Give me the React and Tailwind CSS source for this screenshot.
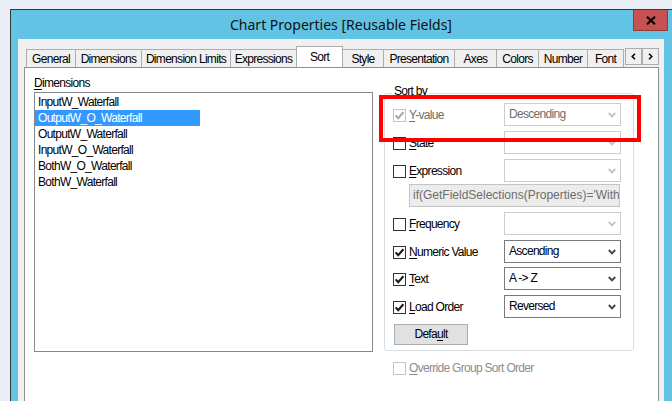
import React from "react";

const F = { fontFamily: '"Liberation Sans", Arial, sans-serif' };

function Check({ checked, disabled }) {
  return (
    <span
      className={`flex w-[13px] h-[13px] shrink-0 items-center justify-center border bg-white mt-[2px] ${
        disabled ? "border-[#c4c4c4]" : "border-[#333333]"
      }`}
    >
      {checked && (
        <svg width="11" height="11" viewBox="0 0 11 11">
          <path
            d="M1.6 5.4 L4.2 8.2 L9.4 2.2"
            fill="none"
            stroke={disabled ? "#a8a8a8" : "#1a1a1a"}
            strokeWidth="2.1"
          />
        </svg>
      )}
    </span>
  );
}

function Chevron({ disabled }) {
  return (
    <svg width="8" height="6" viewBox="0 0 8 6">
      <path
        d="M0.8 1 L4 4.3 L7.2 1"
        fill="none"
        stroke={disabled ? "#c2c2c2" : "#444444"}
        strokeWidth="1.9"
      />
    </svg>
  );
}

function Drop({ value, disabled }) {
  return (
    <div
      className={`flex w-[117px] h-[23px] shrink-0 items-center border bg-white pl-[4px] pr-[4px] ${
        disabled ? "border-[#cccccc] text-[#6d6d6d]" : "border-[#7a7a7a] text-black"
      }`}
    >
      <span className="flex-1 leading-[14px] mb-[1px]">{value}</span>
      <Chevron disabled={disabled} />
    </div>
  );
}

function U({ children }) {
  return <span className="underline underline-offset-[2px] decoration-1">{children}</span>;
}

function Row({ checked, disabled, first, rest, drop, dropDisabled }) {
  return (
    <div className="flex h-[23px] items-center pl-[8px] pr-[12px]">
      <Check checked={checked} disabled={disabled} />
      <span
        className={`flex-1 ml-[3px] leading-[14px] ${disabled ? "text-[#6d6d6d]" : "text-black"}`}
      >
        <U>{first}</U>
        {rest}
      </span>
      <Drop value={drop} disabled={dropDisabled} />
    </div>
  );
}

const tabs = [
  ["General", 50],
  ["Dimensions", 67],
  ["Dimension Limits", 90],
  ["Expressions", 67],
  ["Sort", 47, true],
  ["Style", 42],
  ["Presentation", 72],
  ["Axes", 43],
  ["Colors", 43],
  ["Number", 50],
  ["Font", 37],
];

const items = [
  "InputW_Waterfall",
  "OutputW_O_Waterfall",
  "OutputW_Waterfall",
  "InputW_O_Waterfall",
  "BothW_O_Waterfall",
  "BothW_Waterfall",
];

export default function App() {
  return (
    <div
      className="w-[672px] h-[401px] overflow-hidden bg-[#eaeff7] pt-[9px] pl-[10px] text-[12px] tracking-[-0.7px]"
      style={F}
    >
      <div className="flex flex-col w-[663px] h-[392px] border-l border-t border-[#383838] bg-[#62c3e5]">
        {/* title bar */}
        <div className="flex h-[29px] shrink-0 items-start">
          <span
            className="ml-[219px] leading-[29px] text-[14px] tracking-normal text-[#111111] whitespace-nowrap"
            style={{ fontFamily: '"Noto Sans", "Open Sans", sans-serif' }}
          >
            Chart Properties [Reusable Fields]
          </span>
          <div className="ml-auto mr-[5px] flex w-[35px] h-[21px] items-center justify-center bg-[#c75050] border border-t-0 border-[#8f3b3b]">
            <svg width="10" height="9" viewBox="0 0 10 9">
              <path d="M1 0.8 L9 8.2 M9 0.8 L1 8.2" stroke="#000" strokeWidth="2.2" />
            </svg>
          </div>
        </div>

        {/* body */}
        <div className="ml-[7px] w-[646px] flex-1 bg-[#f0f0f0] pt-[7px]">
          {/* tab strip */}
          <div className="flex h-[21px]">
            <div className="ml-[8px] flex w-[599px] items-end overflow-hidden">
              {tabs.map(([t, w, active], i) =>
                active ? (
                  <div
                    key={t}
                    className="relative z-10 -ml-px -mb-px flex h-[22px] shrink-0 justify-center border border-b-0 border-[#acacac] bg-white pt-[2px] leading-[16px] text-black"
                    style={{ width: w }}
                  >
                    {t}
                  </div>
                ) : (
                  <div
                    key={t}
                    className={`${i === 0 ? "" : "-ml-px"} flex h-[18px] shrink-0 items-center justify-center border border-b-0 border-[#acacac] bg-[#f0f0f0] pt-[1px] leading-[16px] text-black whitespace-nowrap`}
                    style={{ width: w }}
                  >
                    {t}
                  </div>
                )
              )}
            </div>
            <div className="mt-[2px] flex h-[17px]">
              <div className="flex w-[17px] h-[17px] items-center justify-center border border-[#acacac] bg-[#f0f0f0]">
                <svg width="5" height="7" viewBox="0 0 5 7">
                  <path d="M4 0.8 L1.2 3.5 L4 6.2" fill="none" stroke="#000" strokeWidth="1.5" />
                </svg>
              </div>
              <div className="flex w-[17px] h-[17px] items-center justify-center border border-[#acacac] bg-[#f0f0f0]">
                <svg width="5" height="7" viewBox="0 0 5 7">
                  <path d="M1 0.8 L3.8 3.5 L1 6.2" fill="none" stroke="#000" strokeWidth="1.5" />
                </svg>
              </div>
            </div>
          </div>

          {/* panel */}
          <div className="relative ml-[6px] flex h-[340px] w-[635px] items-start border border-[#8c8e91] bg-white">
            {/* left column */}
            <div className="ml-[9px] flex flex-col">
              <div className="mt-[8px] leading-[14px] text-black">
                <U>D</U>imensions
              </div>
              <div className="mt-[2px] h-[260px] w-[339px] border border-[#828790] bg-white pt-[1px]">
                {items.map((it, i) => (
                  <div
                    key={it}
                    className={`h-[16px] w-[165px] pl-[3px] leading-[16px] ${
                      i === 1 ? "bg-[#3399ff] text-white" : "text-black"
                    }`}
                  >
                    {it}
                  </div>
                ))}
              </div>
            </div>

            {/* right column */}
            <div className="ml-[11px] mt-[25px] flex flex-col">
              <div className="relative h-[258px] w-[250px] rounded-[3px] border border-[#d5dfe5] pt-[9px]">
                <span className="absolute left-[7px] top-[-10px] bg-white px-[2px] leading-[14px] text-black">
                  Sort by
                </span>
                <Row checked disabled first="Y" rest="-value" drop="Descending" dropDisabled />
                <div className="h-[5px]" />
                <Row first="S" rest="tate" drop="" dropDisabled />
                <div className="h-[5px]" />
                <Row first="E" rest="xpression" drop="" dropDisabled />
                <div className="ml-[24px] mt-[2px] flex h-[23px] w-[211px] items-center overflow-hidden whitespace-nowrap border border-[#c4c4c4] bg-[#ececec] pl-[3px] text-[#6d6d6d] tracking-normal">
                  <span className="leading-[14px] mb-[1px]">if(GetFieldSelections(Properties)='With</span>
                </div>
                <div className="h-[5px]" />
                <Row first="F" rest="requency" drop="" dropDisabled />
                <div className="h-[5px]" />
                <Row checked first="N" rest="umeric Value" drop="Ascending" />
                <div className="h-[4px]" />
                <Row checked first="T" rest="ext" drop="A -> Z" />
                <div className="h-[5px]" />
                <Row checked first="L" rest="oad Order" drop="Reversed" />
                <div className="ml-[9px] mt-[6px] flex h-[21px] w-[74px] items-center justify-center border border-[#adadad] bg-[#e1e1e1] leading-[14px] text-black">
                  <span className="mb-[1px]">
                    Defa<U>u</U>lt
                  </span>
                </div>
              </div>
              <div className="ml-[9px] mt-[8px] flex h-[17px] items-center">
                <Check disabled />
                <span className="ml-[3px] leading-[14px] text-[#8d8d8d]">
                  <U>O</U>verride Group Sort Order
                </span>
              </div>
            </div>

            {/* annotation */}
            <div className="absolute left-[354px] top-[27px] h-[47px] w-[262px] border-[4px] border-[#ff0000]" />
          </div>
        </div>
      </div>
    </div>
  );
}
